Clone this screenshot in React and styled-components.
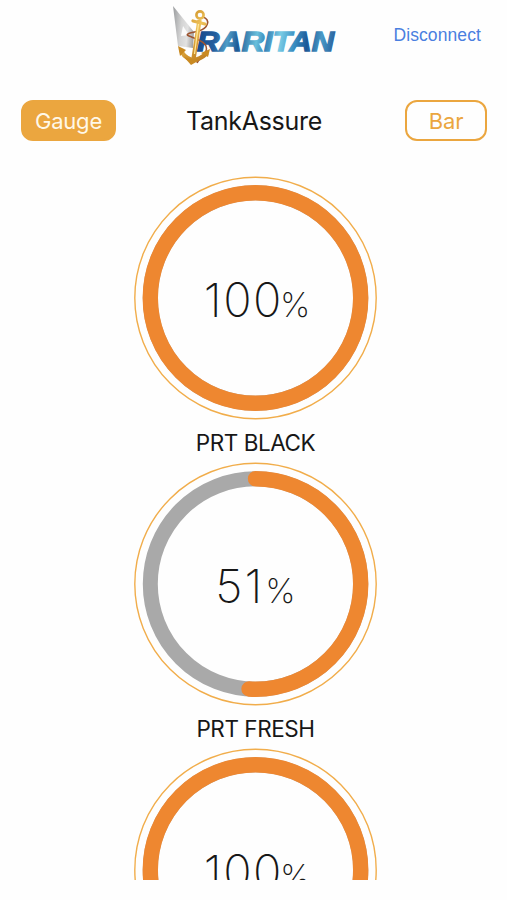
import styled, { createGlobalStyle } from "styled-components";

const tanks = [
  { id: 1, name: "PRT BLACK", level: 100 },
  { id: 2, name: "PRT FRESH", level: 51 },
  { id: 3, name: "", level: 100 },
];

const RADIUS = 105.2;

const Logo = () => (
  <LogoSvg viewBox="0 0 170 66" role="img" aria-label="Raritan">
    <defs>
      <linearGradient id="sail" x1="0" y1="0.4" x2="1" y2="0.6">
        <stop offset="0" stopColor="#a2a4a6" />
        <stop offset="0.4" stopColor="#d4d4d4" />
        <stop offset="0.7" stopColor="#e2e2e2" />
        <stop offset="1" stopColor="#a3a3a3" />
      </linearGradient>
      <linearGradient id="gold" gradientUnits="userSpaceOnUse" x1="8" y1="20" x2="42" y2="58">
        <stop offset="0" stopColor="#c98a22" />
        <stop offset="0.35" stopColor="#efc35a" />
        <stop offset="0.6" stopColor="#d59a32" />
        <stop offset="1" stopColor="#b8771f" />
      </linearGradient>
      <linearGradient id="water" gradientUnits="userSpaceOnUse" x1="28" y1="32" x2="164" y2="50">
        <stop offset="0" stopColor="#17498a" />
        <stop offset="0.13" stopColor="#245f9e" />
        <stop offset="0.22" stopColor="#4f9cc6" />
        <stop offset="0.3" stopColor="#1d5995" />
        <stop offset="0.43" stopColor="#69c0dc" />
        <stop offset="0.5" stopColor="#3583b8" />
        <stop offset="0.6" stopColor="#79cce5" />
        <stop offset="0.7" stopColor="#3d92c4" />
        <stop offset="0.8" stopColor="#1c5796" />
        <stop offset="0.9" stopColor="#4a9ac7" />
        <stop offset="1" stopColor="#285f9c" />
      </linearGradient>
    </defs>
    <path d="M3 6L24 32L23 48L8 46Z" fill="url(#sail)" />
    <path d="M13 26L19 35L11 36Z" fill="#fbfbfb" />
    <LogoText x="27" y="50.7" textLength="137" lengthAdjust="spacingAndGlyphs">
      RARITAN
    </LogoText>
    <path
      d="M33 17C41 20 38 28 29 31C20 33 14 34 19 36C26 39 39 42 36 51C34 57 28 59 27 63"
      fill="none"
      stroke="#9c5430"
      strokeWidth="1.5"
    />
    <g fill="none" stroke="url(#gold)">
      <circle cx="30" cy="15" r="3.6" strokeWidth="2.6" />
      <path d="M23 21L35 24" strokeWidth="3.2" strokeLinecap="round" />
      <path d="M29.5 20L23.5 59" strokeWidth="4.4" />
      <path d="M11 49C12 55 16 58 22 60C28 60 33 57 37 53" strokeWidth="4.4" />
    </g>
    <path d="M8 46L16 50L10 56ZM31 53L40 49L38 57ZM14 57L28 61L21 65Z" fill="#c98a22" />
    <path d="M28.5 24L24.5 54" stroke="#ffe9a0" strokeWidth="1.2" />
  </LogoSvg>
);

const Gauge = ({ tank }) => {
  const isFull = tank.level === 100;

  return (
    <GaugeItem>
      <Dial>
        <DialSvg viewBox="0 0 244 244">
          <Outline cx="121.5" cy="122" r="120.7" />
          <Track cx="121.5" cy="122" r={RADIUS} />
          <Level
            cx="121.5"
            cy="122"
            r={RADIUS}
            pathLength="100"
            strokeDasharray={isFull ? undefined : `${tank.level} 100`}
            transform="rotate(-90 121.5 122)"
          />
        </DialSvg>
        <Reading $spaced={!isFull}>
          {tank.level}
          <Percent $spaced={!isFull}>%</Percent>
        </Reading>
      </Dial>
      {tank.name && <TankName>{tank.name}</TankName>}
    </GaugeItem>
  );
};

const App = () => (
  <>
    <GlobalStyle />
    <Screen>
      <Header>
        <Logo />
        <DisconnectButton>Disconnect</DisconnectButton>
      </Header>
      <Toolbar>
        <ModeButton $active $width="95px">
          Gauge
        </ModeButton>
        <Title>TankAssure</Title>
        <ModeButton $width="82px">Bar</ModeButton>
      </Toolbar>
      <GaugeList>
        {tanks.map((tank) => (
          <Gauge key={tank.id} tank={tank} />
        ))}
      </GaugeList>
    </Screen>
  </>
);

const GlobalStyle = createGlobalStyle`
  * {
    box-sizing: border-box;
  }

  body {
    margin: 0;
    background: #fefefe;
    font-family: Inter, "Liberation Sans", sans-serif;
    color: #171717;
  }

  button {
    padding: 0;
    border: 0;
    background: none;
    font-family: inherit;
  }
`;

const Screen = styled.div`
  display: flex;
  flex-direction: column;
  width: 507px;
  height: 900px;
  padding-bottom: 20px;
  overflow: hidden;
`;

const Header = styled.header`
  display: grid;
  grid-template-columns: 170px 170px 1fr;
  height: 100px;
  flex-shrink: 0;
  align-items: start;
`;

const LogoSvg = styled.svg`
  grid-column: 2;
  width: 170px;
  height: 66px;
`;

const LogoText = styled.text`
  font-family: "Liberation Sans", sans-serif;
  font-size: 27px;
  font-weight: bold;
  font-style: italic;
  fill: url(#water);
  stroke: url(#water);
  stroke-width: 1.3;
`;

const DisconnectButton = styled.button`
  justify-self: end;
  margin: 25px 26px 0 0;
  font-family: "Liberation Sans", sans-serif;
  font-size: 17.5px;
  line-height: 20px;
  letter-spacing: 0.1px;
  color: #4a7fe0;
`;

const Toolbar = styled.div`
  display: grid;
  grid-template-columns: 1fr auto 1fr;
  align-items: center;
  height: 41px;
  padding: 0 20px 0 21px;
  flex-shrink: 0;
`;

const ModeButton = styled.button`
  width: ${(props) => props.$width};
  height: 41px;
  border: 2px solid #eba63f;
  border-radius: 12px;
  background: ${(props) => (props.$active ? "#eba63f" : "transparent")};
  color: ${(props) => (props.$active ? "#fff8e8" : "#eba63f")};
  font-size: 22px;
  letter-spacing: -0.2px;

  &:last-child {
    justify-self: end;
  }
`;

const Title = styled.h1`
  margin: 0;
  font-size: 25px;
  font-weight: 400;
  letter-spacing: -0.3px;
`;

const GaugeList = styled.main`
  display: flex;
  flex-direction: column;
  align-items: center;
  flex: 1;
  min-height: 0;
  padding: 35px 0 0 4px;
  overflow: hidden;
`;

const GaugeItem = styled.section`
  display: flex;
  flex-direction: column;
  align-items: center;
  height: 286px;
  flex-shrink: 0;
`;

const Dial = styled.div`
  display: grid;
  width: 244px;
  height: 244px;
  place-items: center;

  & > * {
    grid-area: 1 / 1;
  }
`;

const DialSvg = styled.svg`
  width: 244px;
  height: 244px;
  fill: none;
`;

const Outline = styled.circle`
  stroke: #f1ad4b;
  stroke-width: 1.4;
`;

const Track = styled.circle`
  stroke: #a9a9a9;
  stroke-width: 15;
`;

const Level = styled.circle`
  stroke: #ee8730;
  stroke-width: 15.4;
  stroke-linecap: round;
`;

const Reading = styled.div`
  display: flex;
  align-items: baseline;
  padding-top: 9px;
  padding-left: ${(props) => (props.$spaced ? "0" : "3px")};
  font-size: 47px;
  font-weight: 200;
  line-height: 56px;
  letter-spacing: ${(props) => (props.$spaced ? "2px" : "1.5px")};
`;

const Percent = styled.span`
  margin-left: ${(props) => (props.$spaced ? "1px" : "-3px")};
  font-size: 34px;
  letter-spacing: 0;
`;

const TankName = styled.h2`
  margin: 7px 0 0;
  font-size: 22.5px;
  font-weight: 400;
  line-height: 32px;
  letter-spacing: -0.45px;
`;

export default App;
